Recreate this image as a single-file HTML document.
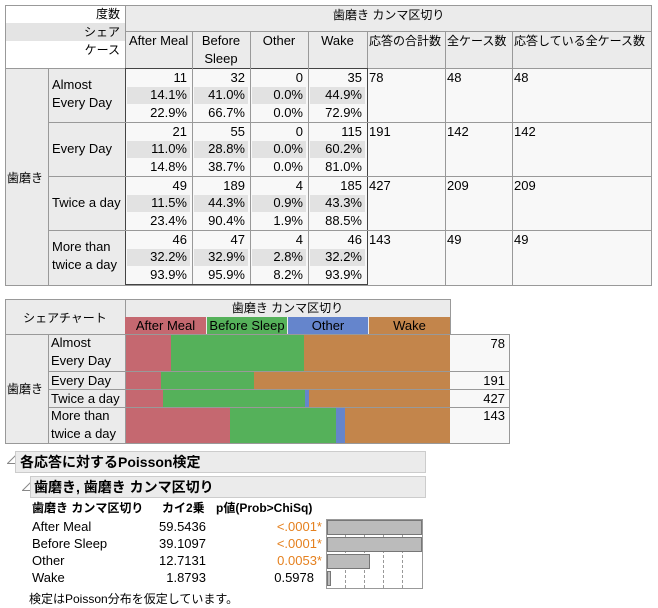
<html><head><style>
body{margin:0;width:658px;height:608px;background:#fff;font-family:"Liberation Sans","Noto Sans CJK JP",sans-serif;font-size:13px;color:#000;position:relative;overflow:hidden}
div{position:absolute;box-sizing:border-box}
.t{white-space:nowrap;line-height:18px}
.r{text-align:right}
.b{font-weight:bold}
.j{font-size:12px}
.p{line-height:17px}
</style></head><body>
<div style="left:5px;top:5px;width:647px;height:281px;border:1px solid #999;background:#f8f8f8"></div>
<div style="left:6px;top:6px;width:119px;height:62px;background:#fff"></div>
<div style="left:6px;top:23px;width:119px;height:18px;background:#e4e4e4"></div>
<div class="t r j" style="left:6px;top:5px;width:114px">度数</div>
<div class="t r j" style="left:6px;top:23px;width:114px">シェア</div>
<div class="t r j" style="left:6px;top:41px;width:114px">ケース</div>
<div style="left:125px;top:6px;width:526px;height:62px;background:#ebebeb;border-left:1px solid #999"></div>
<div style="left:125px;top:31px;width:526px;height:1px;background:#999"></div>
<div class="t j" style="left:333px;top:6px">歯磨き カンマ区切り</div>
<div style="left:6px;top:68px;width:119px;height:217px;background:#ebebeb;border-top:1px solid #999"></div>
<div style="left:48px;top:68px;width:1px;height:217px;background:#999"></div>
<div class="t j" style="left:7px;top:169px">歯磨き</div>
<div style="left:192px;top:31px;width:1px;height:37px;background:#999"></div>
<div style="left:250px;top:31px;width:1px;height:37px;background:#999"></div>
<div style="left:308px;top:31px;width:1px;height:37px;background:#999"></div>
<div style="left:367px;top:31px;width:1px;height:37px;background:#999"></div>
<div style="left:445px;top:31px;width:1px;height:254px;background:#999"></div>
<div style="left:512px;top:31px;width:1px;height:254px;background:#999"></div>
<div style="left:367px;top:68px;width:285px;height:1px;background:#999"></div>
<div class="t" style="left:129px;top:32px">After Meal</div>
<div class="t" style="left:194px;top:32px;width:54px;text-align:center">Before<br>Sleep</div>
<div class="t" style="left:250px;top:32px;width:58px;text-align:center">Other</div>
<div class="t" style="left:308px;top:32px;width:59px;text-align:center">Wake</div>
<div class="t j" style="left:369px;top:32px">応答の合計数</div>
<div class="t j" style="left:447px;top:32px">全ケース数</div>
<div class="t j" style="left:514px;top:32px">応答している全ケース数</div>
<div style="left:125px;top:68px;width:243px;height:217px;border:1px solid #444;background:#f8f8f8"></div>
<div id="rows"></div>
<script>
var g=[["Almost<br>Every Day",[11,32,0,35],["14.1%","41.0%","0.0%","44.9%"],["22.9%","66.7%","0.0%","72.9%"],[78,48,48],1],
["Every Day",[21,55,0,115],["11.0%","28.8%","0.0%","60.2%"],["14.8%","38.7%","0.0%","81.0%"],[191,142,142],0],
["Twice a day",[49,189,4,185],["11.5%","44.3%","0.9%","43.3%"],["23.4%","90.4%","1.9%","88.5%"],[427,209,209],0],
["More than<br>twice a day",[46,47,4,46],["32.2%","32.9%","2.8%","32.2%"],["93.9%","95.9%","8.2%","93.9%"],[143,49,49],1]];
var cx=[125,192,250,308,367],h="";
for(var i=0;i<4;i++){var y=68+i*54;
if(i>0)h+='<div style="left:48px;top:'+y+'px;width:604px;height:1px;background:#999"></div>';
h+='<div class="t" style="left:52px;top:'+(y+(g[i][5]?8:18))+'px">'+g[i][0]+'</div>';
for(var c=0;c<4;c++){var x=cx[c],w=cx[c+1]-x;
h+='<div style="left:'+(x+2)+'px;top:'+(y+19)+'px;width:'+(w-4)+'px;height:17px;background:#e2e2e2"></div>';
h+='<div class="t r" style="left:'+x+'px;top:'+(y+1)+'px;width:'+(w-5)+'px">'+g[i][1][c]+'</div>';
h+='<div class="t r" style="left:'+x+'px;top:'+(y+18)+'px;width:'+(w-5)+'px">'+g[i][2][c]+'</div>';
h+='<div class="t r" style="left:'+x+'px;top:'+(y+36)+'px;width:'+(w-5)+'px">'+g[i][3][c]+'</div>';
if(c>0)h+='<div style="left:'+x+'px;top:'+y+'px;width:1px;height:54px;background:#999"></div>';}
h+='<div class="t" style="left:369px;top:'+(y+1)+'px">'+g[i][4][0]+'</div>';
h+='<div class="t" style="left:447px;top:'+(y+1)+'px">'+g[i][4][1]+'</div>';
h+='<div class="t" style="left:514px;top:'+(y+1)+'px">'+g[i][4][2]+'</div>';}
document.getElementById('rows').outerHTML=h;
</script>
<div style="left:5px;top:299px;width:446px;height:145px;border:1px solid #999;background:#ebebeb"></div>
<div style="left:125px;top:299px;width:1px;height:145px;background:#999"></div>
<div style="left:5px;top:334px;width:446px;height:1px;background:#999"></div>
<div class="t j" style="left:5px;top:309px;width:120px;text-align:center">シェアチャート</div>
<div class="t j" style="left:125px;top:299px;width:325px;text-align:center">歯磨き カンマ区切り</div>
<div class="t" style="left:125px;top:317px;width:81px;height:17px;background:#c56870;text-align:center">After Meal</div>
<div class="t" style="left:207px;top:317px;width:80px;height:17px;background:#55b15a;text-align:center">Before Sleep</div>
<div class="t" style="left:288px;top:317px;width:80px;height:17px;background:#6585cc;text-align:center">Other</div>
<div class="t" style="left:369px;top:317px;width:81px;height:17px;background:#c3854b;text-align:center">Wake</div>
<div style="left:48px;top:334px;width:1px;height:110px;background:#999"></div>
<div class="t j" style="left:7px;top:380px">歯磨き</div>
<div class="t" style="left:51px;top:334px">Almost<br>Every Day</div>
<div class="t" style="left:51px;top:372px">Every Day</div>
<div class="t" style="left:51px;top:390px">Twice a day</div>
<div class="t" style="left:51px;top:407px">More than<br>twice a day</div>
<div style="left:48px;top:371px;width:402px;height:1px;background:#999"></div>
<div style="left:48px;top:389px;width:402px;height:1px;background:#999"></div>
<div style="left:48px;top:407px;width:402px;height:1px;background:#999"></div>
<div style="left:126px;top:335px;width:45px;height:36px;background:#c56870"></div><div style="left:171px;top:335px;width:133px;height:36px;background:#55b15a"></div><div style="left:304px;top:335px;width:146px;height:36px;background:#c3854b"></div>
<div style="left:126px;top:372px;width:35px;height:17px;background:#c56870"></div><div style="left:161px;top:372px;width:93px;height:17px;background:#55b15a"></div><div style="left:254px;top:372px;width:196px;height:17px;background:#c3854b"></div>
<div style="left:126px;top:390px;width:37px;height:17px;background:#c56870"></div><div style="left:163px;top:390px;width:142px;height:17px;background:#55b15a"></div><div style="left:305px;top:390px;width:4px;height:17px;background:#6585cc"></div><div style="left:309px;top:390px;width:141px;height:17px;background:#c3854b"></div>
<div style="left:126px;top:408px;width:104px;height:35px;background:#c56870"></div><div style="left:230px;top:408px;width:106px;height:35px;background:#55b15a"></div><div style="left:336px;top:408px;width:9px;height:35px;background:#6585cc"></div><div style="left:345px;top:408px;width:105px;height:35px;background:#c3854b"></div>
<div style="left:450px;top:334px;width:60px;height:110px;border:1px solid #999;border-left:none;background:#f8f8f8"></div>
<div style="left:450px;top:371px;width:59px;height:1px;background:#999"></div>
<div style="left:450px;top:389px;width:59px;height:1px;background:#999"></div>
<div style="left:450px;top:407px;width:59px;height:1px;background:#999"></div>
<div class="t r" style="left:450px;top:335px;width:55px">78</div>
<div class="t r" style="left:450px;top:372px;width:55px">191</div>
<div class="t r" style="left:450px;top:390px;width:55px">427</div>
<div class="t r" style="left:450px;top:407px;width:55px">143</div>
<svg style="position:absolute;left:7px;top:455px" width="10" height="10"><path d="M8.5 0.5 L8.5 8.5 L0.5 8.5 Z" fill="none" stroke="#888"/></svg>
<div style="left:15px;top:451px;width:411px;height:22px;background:#ebebeb;border:1px solid #ccc"></div>
<div class="t b" style="left:20px;top:453px;font-size:14px">各応答に対するPoisson検定</div>
<svg style="position:absolute;left:22px;top:482px" width="10" height="10"><path d="M8.5 0.5 L8.5 8.5 L0.5 8.5 Z" fill="none" stroke="#888"/></svg>
<div style="left:30px;top:476px;width:396px;height:22px;background:#ebebeb;border:1px solid #ccc"></div>
<div class="t b" style="left:34px;top:478px;font-size:14px">歯磨き, 歯磨き カンマ区切り</div>
<div class="t b j" style="left:32px;top:499px">歯磨き カンマ区切り</div>
<div class="t b j" style="left:162px;top:499px">カイ2乗</div>
<div class="t b j" style="left:216px;top:499px">p値(Prob&gt;ChiSq)</div>
<div class="t p" style="left:32px;top:518px">After Meal<br>Before Sleep<br>Other<br>Wake</div>
<div class="t r p" style="left:140px;top:518px;width:66px">59.5436<br>39.1097<br>12.7131<br>1.8793</div>
<div class="t r p" style="left:240px;top:518px;width:82px;color:#e5801e">&lt;.0001*<br>&lt;.0001*<br>0.0053*</div>
<div class="t r p" style="left:240px;top:569px;width:74px">0.5978</div>
<div style="left:326px;top:519px;width:97px;height:70px;border:1px solid #999;background:#fff"></div>
<div style="left:345px;top:520px;width:0;height:68px;border-left:1px dashed #999"></div>
<div style="left:364px;top:520px;width:0;height:68px;border-left:1px dashed #999"></div>
<div style="left:383px;top:520px;width:0;height:68px;border-left:1px dashed #999"></div>
<div style="left:402px;top:520px;width:0;height:68px;border-left:1px dashed #999"></div>
<div style="left:327px;top:520px;width:95px;height:15px;background:#bbb;border:1px solid #777"></div>
<div style="left:327px;top:537px;width:95px;height:15px;background:#bbb;border:1px solid #777"></div>
<div style="left:327px;top:554px;width:43px;height:15px;background:#bbb;border:1px solid #777"></div>
<div style="left:327px;top:571px;width:4px;height:15px;background:#bbb;border:1px solid #777"></div>
<div class="t j" style="left:29px;top:590px">検定はPoisson分布を仮定しています。</div>
</body></html>
